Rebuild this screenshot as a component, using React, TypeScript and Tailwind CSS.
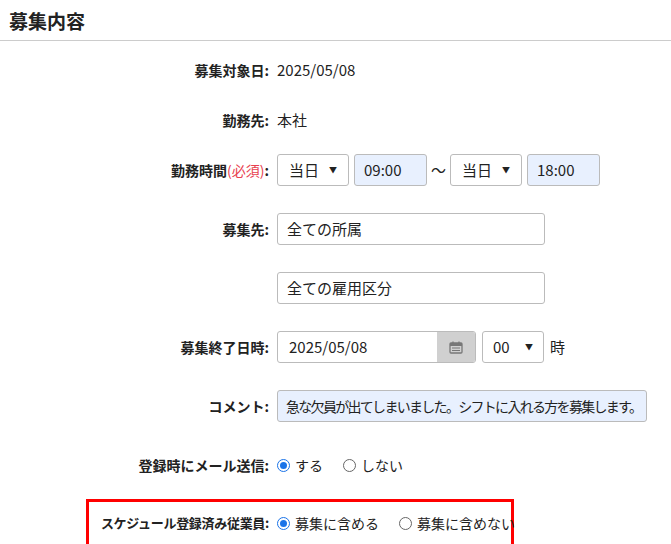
import React from "react";

const F = { fontFamily: '"Noto Sans CJK JP", "Noto Sans", sans-serif' };

function Row({ label, children, h, req }: { label: string; children: React.ReactNode; h: string; req?: boolean }) {
  return (
    <div className={`flex items-center ${h}`}>
      <div className="w-[270px] shrink-0 text-right font-bold text-[14px] text-[#222] pr-[1px] whitespace-nowrap">
        {label}
        {req && <span className="font-normal text-[#e8414f]">(必須)</span>}:
      </div>
      <div className="pl-[7px] flex items-center text-[15px] text-[#222] whitespace-nowrap">{children}</div>
    </div>
  );
}

const Caret = () => <span className="text-[8px] text-[#222]">▼</span>;

function Radio({ on, label }: { on?: boolean; label: string }) {
  return (
    <span className="flex items-center gap-[5px] mr-[20px] whitespace-nowrap text-[14px]">
      <span className={`w-[13px] h-[13px] rounded-full border flex items-center justify-center bg-white ${on ? "border-[#1a73e8]" : "border-[#666]"}`}>
        {on && <span className="w-[7px] h-[7px] rounded-full bg-[#1a73e8]" />}
      </span>
      {label}
    </span>
  );
}

export default function App() {
  return (
    <div className="w-[671px] h-[544px] bg-white overflow-hidden" style={F}>
      <div className="h-[41px] border-b border-[#ccc] flex items-center pl-[9px] pt-[2px]">
        <span className="text-[19px] font-bold text-[#222]">募集内容</span>
      </div>
      <div className="pt-[4px]">
        <Row label="募集対象日" h="h-[50px]">2025/05/08</Row>
        <Row label="勤務先" h="h-[50px]">本社</Row>
        <Row label="勤務時間" req h="h-[50px]">
          <div className="w-[72px] h-[32px] border border-[#bbb] rounded-[3px] flex items-center justify-between px-[11px]">当日<Caret /></div>
          <div className="ml-[5px] w-[73px] h-[32px] border border-[#bbb] rounded-[3px] bg-[#e8f0fe] flex items-center px-[9px]">09:00</div>
          <span className="mx-[4px]">～</span>
          <div className="w-[72px] h-[32px] border border-[#bbb] rounded-[3px] flex items-center justify-between px-[11px]">当日<Caret /></div>
          <div className="ml-[5px] w-[73px] h-[32px] border border-[#bbb] rounded-[3px] bg-[#e8f0fe] flex items-center px-[9px]">18:00</div>
        </Row>
        <Row label="募集先" h="h-[68px]">
          <div className="w-[268px] h-[32px] border border-[#bbb] rounded-[3px] flex items-center px-[9px]">全ての所属</div>
        </Row>
        <div className="flex items-center h-[50px] pl-[277px] text-[15px] text-[#222]">
          <div className="w-[268px] h-[32px] border border-[#bbb] rounded-[3px] flex items-center px-[9px]">全ての雇用区分</div>
        </div>
        <Row label="募集終了日時" h="h-[68px]">
          <div className="w-[199px] h-[32px] border border-[#bbb] rounded-[3px] flex overflow-hidden">
            <div className="flex-1 flex items-center px-[11px]">2025/05/08</div>
            <div className="w-[38px] bg-[#d0d0d0] flex items-center justify-center">
              <svg width="14" height="13" viewBox="0 0 14 13"><rect x="1" y="2" width="12" height="10" rx="1" fill="none" stroke="#777" strokeWidth="1.3"/><rect x="1" y="2" width="12" height="3" fill="#777"/><line x1="4" y1="0.5" x2="4" y2="3" stroke="#777" strokeWidth="1.3"/><line x1="10" y1="0.5" x2="10" y2="3" stroke="#777" strokeWidth="1.3"/><line x1="3" y1="7" x2="11" y2="7" stroke="#777"/><line x1="3" y1="9.5" x2="11" y2="9.5" stroke="#777"/></svg>
            </div>
          </div>
          <div className="ml-[6px] w-[62px] h-[32px] border border-[#bbb] rounded-[3px] flex items-center justify-between px-[10px]">00<Caret /></div>
          <span className="ml-[6px]">時</span>
        </Row>
        <Row label="コメント" h="h-[50px]">
          <div className="w-[370px] h-[32px] border border-[#bbb] rounded-[3px] bg-[#e8f0fe] flex items-center px-[8px] whitespace-nowrap text-[14px] tracking-[-1.7px]">急な欠員が出てしまいました。シフトに入れる方を募集します。</div>
        </Row>
        <Row label="登録時にメール送信" h="h-[68px]">
          <Radio on label="する" /><Radio label="しない" />
        </Row>
        <div className="ml-[86px] w-[428px] h-[48px] border-[3px] border-[#f00] flex items-center">
          <div className="w-[181px] shrink-0 text-right font-bold text-[13px] text-[#222] pr-[1px] whitespace-nowrap tracking-[-0.3px]">スケジュール登録済み従業員:</div>
          <div className="pl-[7px] flex items-center text-[14px] text-[#222]">
            <Radio on label="募集に含める" /><Radio label="募集に含めない" />
          </div>
        </div>
      </div>
    </div>
  );
}
